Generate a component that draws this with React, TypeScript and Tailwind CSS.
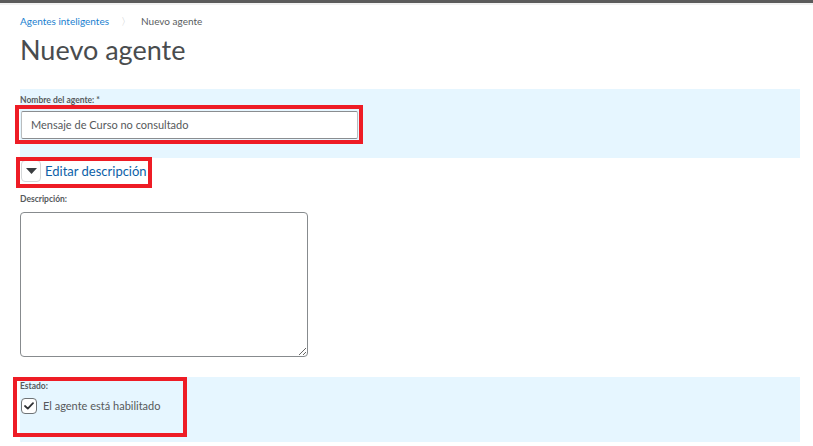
export default function App() {
  return (
    <div className="min-h-screen w-full bg-white font-['Lato','Noto_Sans',sans-serif] text-[#494c4e]">
      <div className="h-[3px] w-full bg-[#5b5b5b]" />
      <div className="h-[2px] w-full bg-[#f1f1f1]" />

      <div className="pl-[20px] pr-[13px]">
        {/* breadcrumb */}
        <div className="flex items-center pt-[9px] text-[10px] leading-[14px]">
          <span className="text-[#1a7fd0]">Agentes inteligentes</span>
          <span className="ml-[12px] mr-[10px] text-[#c4c7c9]">〉</span>
          <span className="text-[#595d60]">Nuevo agente</span>
        </div>

        <h1 className="mt-[7px] text-[27px] font-normal leading-[30px] text-[#494c4e]">Nuevo agente</h1>

        {/* nombre */}
        <div className="mt-[24px] h-[69px] bg-[#e6f6ff] pt-[5px]">
          <div className="text-[8.5px] font-bold leading-[12px] text-[#565a5c]">Nombre del agente: *</div>
          <div className="relative mt-[5px] w-[338px]">
            <div className="absolute -left-[5px] -top-[6px] -right-[5px] -bottom-[5px] border-[4px] border-[#ee1c25]" />
            <div className="ml-[1px] flex h-[28px] items-center rounded-[2px] border border-[#b9bcbe] border-t-[#8a8d90] border-b-[#8a8d90] bg-white px-[9px] text-[11px] text-[#56595b]">
              Mensaje de Curso no consultado
            </div>
          </div>
        </div>

        {/* editar descripción */}
        <div className="relative mt-[2px] flex h-[22px] w-[128px] items-center">
          <div className="absolute -left-[4px] -top-[3px] -right-[4px] -bottom-[6px] border-[4px] border-[#ee1c25]" />
          <div className="ml-[1px] flex h-[22px] w-[20px] items-center justify-center rounded-[4px] border border-[#d3d6d8] bg-white">
            <svg width="11" height="6" viewBox="0 0 11 6">
              <path d="M0 0 L11 0 L5.5 6 Z" fill="#3a3d40" />
            </svg>
          </div>
          <span className="ml-[4px] whitespace-nowrap text-[13px] leading-[16px] text-[#0c5fa8]">Editar descripción</span>
        </div>

        {/* descripción */}
        <div className="mt-[11px] text-[8.5px] font-bold leading-[12px] text-[#565a5c]">Descripción:</div>
        <textarea
          readOnly
          className="mt-[7px] block h-[145px] w-[288px] resize rounded-[4px] border border-[#878b8e] bg-white"
        />

        {/* estado */}
        <div className="mt-[20px] h-[65px] bg-[#e6f6ff] pt-[3px]">
          <div className="relative w-[167px]">
            <div className="absolute -left-[7px] -top-[3px] right-0 h-[60px] border-[4px] border-[#ee1c25]" />
            <div className="text-[8.5px] font-bold leading-[12px] text-[#565a5c]">Estado:</div>
            <div className="mt-[6px] flex items-center">
              <div className="ml-[1px] flex h-[16px] w-[16px] items-center justify-center rounded-[4px] border border-[#6e7376] bg-white">
                <svg width="10" height="8" viewBox="0 0 10 8">
                  <path d="M1 4 L3.8 6.6 L9 1.2" fill="none" stroke="#2f3235" strokeWidth="1.8" strokeLinecap="round" strokeLinejoin="round" />
                </svg>
              </div>
              <span className="ml-[6px] text-[11px] leading-[14px] text-[#56595b]">El agente está habilitado</span>
            </div>
          </div>
        </div>
      </div>
    </div>
  );
}
